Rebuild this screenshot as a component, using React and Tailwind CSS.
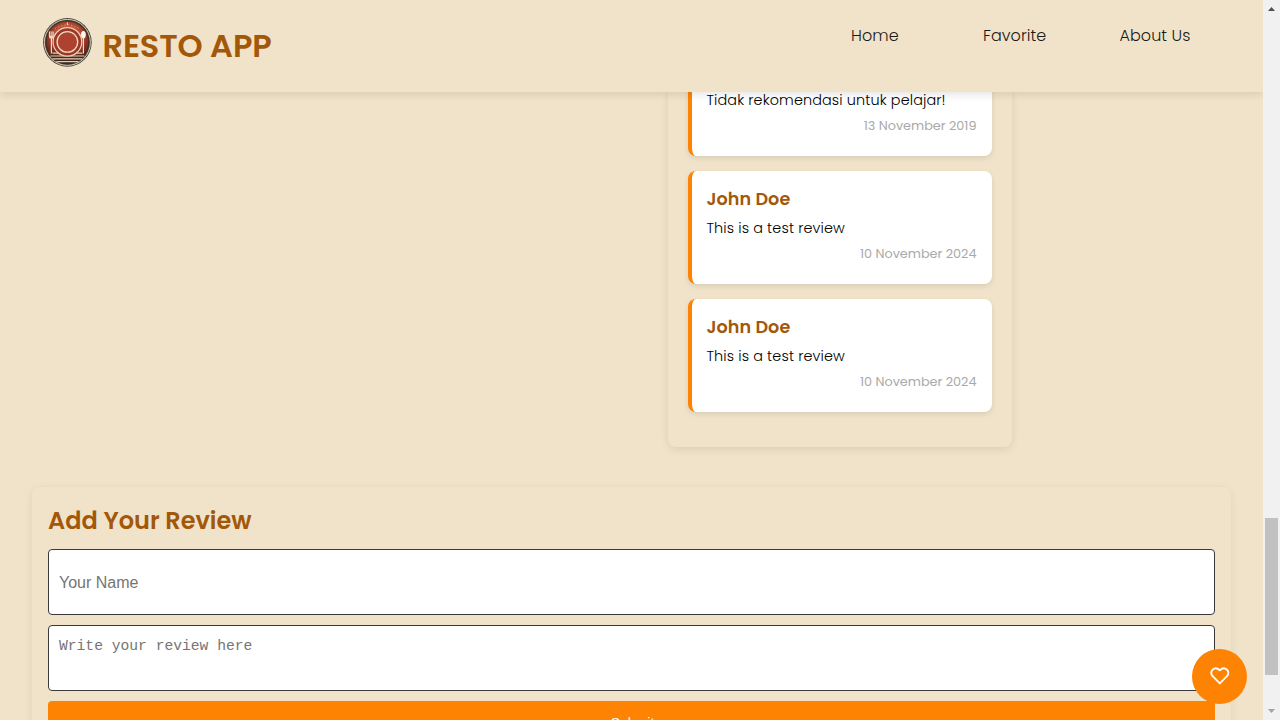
const sans = "font-['Poppins','Inter',sans-serif]";

function Logo() {
  return (
    <svg className="block h-[50px] w-[50px]" viewBox="-0.4 -0.4 50 50" fill="none">
      <defs>
        <linearGradient id="plate" x1="0" y1="0" x2="0" y2="1">
          <stop offset="0" stopColor="#d2603f" />
          <stop offset="0.45" stopColor="#b04030" />
          <stop offset="0.72" stopColor="#80301f" />
          <stop offset="0.85" stopColor="#4a2a20" />
          <stop offset="1" stopColor="#33271f" />
        </linearGradient>
        <radialGradient id="shade">
          <stop offset="0.75" stopColor="#3b1812" stopOpacity="0" />
          <stop offset="1" stopColor="#3b1812" stopOpacity="0.45" />
        </radialGradient>
      </defs>
      <circle cx="25" cy="25" r="24.3" fill="#4a453b" />
      <circle cx="25" cy="25" r="23" stroke="#d5cbb4" strokeWidth="1" />
      <circle cx="25" cy="25" r="21.4" fill="url(#plate)" />
      <circle cx="25" cy="25" r="21.4" fill="url(#shade)" stroke="#3a2a22" strokeWidth="0.8" />
      <path d="M12.500 11.500q12.500-8 25 0" stroke="#e9a888" strokeWidth="0.900" strokeDasharray="1.200 2.200" />
      <path d="M25 5v2.500" stroke="#f3e2ca" strokeWidth="1.100" />
      <path d="M10 35.800h8M32 35.800h8M8 38.600h34M10 41.500h30M14 44.300h22" stroke="#e0d0b4" strokeWidth="1.200" />
      <circle cx="25" cy="24.500" r="14.300" fill="#9c3828" stroke="#ecd0b8" strokeWidth="1.200" />
      <circle cx="25" cy="24.500" r="10.300" fill="#ae4130" stroke="#f0dcc4" strokeWidth="1.300" />
      <path d="M9 20v16" stroke="#f0ddc6" strokeWidth="1.200" />
      <path d="M6.500 14h4.800v5q0 2.400-2.400 2.400T6.500 19z" fill="#ecd9c0" />
      <path d="M8.200 14v4.500M9.700 14v4.500" stroke="#8d3a2a" strokeWidth="0.600" />
      <ellipse cx="41" cy="17.300" rx="2.400" ry="3.700" fill="#fff8ec" />
      <path d="M41 20v16" stroke="#f0ddc6" strokeWidth="1.200" />
    </svg>
  );
}

function Header() {
  return (
    <header className="relative z-10 flex h-[92px] shrink-0 bg-[#f0e3ca] shadow-[0_3px_8px_rgba(0,0,0,0.1)]">
      <div className="flex flex-1 pl-[42px] pt-[17px]">
        <Logo />
        <h1 className="ml-[10.5px] mt-[4px] whitespace-nowrap text-[32px] font-semibold leading-[50px] tracking-[-0.1px] text-[#a35709]">
          RESTO APP
        </h1>
      </div>
      <nav className="flex pr-[72px] pt-6 text-base font-light leading-6 tracking-[0.06px] text-[#1b1a17]">
        <a className="w-[132px] whitespace-nowrap">Home</a>
        <a className="w-[136.5px] whitespace-nowrap">Favorite</a>
        <a className="w-[71.5px] whitespace-nowrap">About Us</a>
      </nav>
    </header>
  );
}

function Review({ name, text, date }) {
  return (
    <article className="h-[113px] shrink-0 rounded-lg border-l-4 border-[#ff8303] bg-white px-[15px] pt-[15px] shadow-[0_2px_5px_rgba(0,0,0,0.1)]">
      <h3 className="-ml-[0.5px] whitespace-nowrap text-[17.6px] font-semibold leading-[27px] tracking-[0.05px] text-[#a35709]">{name}</h3>
      <p className="-ml-[0.5px] mt-[4px] whitespace-nowrap text-[14.4px] font-light leading-[22px] tracking-[0.12px] text-black">{text}</p>
      <p className="mr-[0.5px] mt-[5px] whitespace-nowrap text-right text-[12.8px] leading-[19px] text-[#aaa]">{date}</p>
    </article>
  );
}

function Scrollbar() {
  return (
    <div className="relative z-20 flex w-[17px] shrink-0 flex-col items-center bg-[#f1f1f1]">
      <svg className="block h-[17px] w-[17px] shrink-0" viewBox="0 0 17 17">
        <path d="M5 11l3.500-4 3.500 4z" fill="#505050" />
      </svg>
      <div className="mt-[501px] h-[157px] w-[13px] shrink-0 bg-[#c1c1c1]" />
      <div className="flex-1" />
      <svg className="block h-[17px] w-[17px] shrink-0" viewBox="0 0 17 17">
        <path d="M5 6h7l-3.500 4z" fill="#a3a3a3" />
      </svg>
    </div>
  );
}

export default function App() {
  return (
    <div className={`relative flex h-[720px] w-[1280px] overflow-hidden bg-[#f0e3ca] ${sans}`}>
      <div className="flex min-w-0 flex-1 flex-col">
        <Header />
        <main className="flex min-h-0 flex-1 flex-col overflow-hidden">
          <section className="ml-[668px] flex h-[355px] w-[344px] shrink-0 flex-col justify-end gap-[15px] rounded-b-lg px-5 pb-[35px] shadow-[0_2px_8px_rgba(0,0,0,0.1)]">
            <Review name="Buchori" text="Tidak rekomendasi untuk pelajar!" date="13 November 2019" />
            <Review name="John Doe" text="This is a test review" date="10 November 2024" />
            <Review name="John Doe" text="This is a test review" date="10 November 2024" />
          </section>
          <section className="ml-8 mt-10 flex h-[300px] w-[1199px] shrink-0 flex-col rounded-lg px-4 pt-4 shadow-[0_2px_10px_rgba(0,0,0,0.07)]">
            <h2 className="whitespace-nowrap text-2xl font-semibold leading-9 text-[#a35709]">Add Your Review</h2>
            <input
              className="mt-[10px] h-[66px] shrink-0 rounded border border-[#3c3a38] bg-white px-[10px] pt-[2px] font-['Liberation_Sans',sans-serif] text-base placeholder:text-[#757575]"
              placeholder="Your Name"
            />
            <textarea
              className="mt-[10px] h-[66px] shrink-0 resize-none overflow-hidden rounded border border-[#3c3a38] bg-white px-[10px] pt-[11px] font-['Consolas','Liberation_Mono',monospace] text-[14.65px] leading-[19px] placeholder:text-[#757575]"
              placeholder="Write your review here"
            />
            <button className="mt-[9.5px] h-[44px] shrink-0 rounded bg-[#ff8303] pl-[2px] font-['Liberation_Sans',sans-serif] text-sm leading-5 text-white">
              Submit
            </button>
          </section>
        </main>
      </div>
      <Scrollbar />
      <button className="absolute left-[1192px] top-[649px] z-20 flex h-[55px] w-[55px] items-center justify-center rounded-full bg-[#ff8303]" aria-label="Favorite">
        <svg className="-mt-[2px] block h-[20px] w-[20px]" viewBox="0.2 0.3 20 20" fill="none" stroke="white" strokeWidth="1.900" strokeLinejoin="round">
          <path d="M10 17.600L2.600 10.200C-1 5.600 5-.6 10 4.600 15-.6 21 5.600 17.400 10.200z" />
        </svg>
      </button>
    </div>
  );
}
